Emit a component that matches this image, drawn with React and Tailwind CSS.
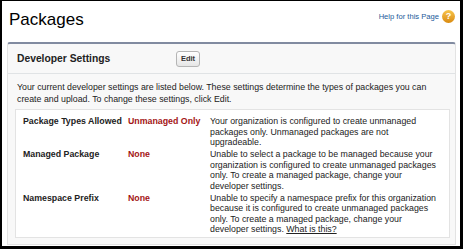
import React from "react";

const rows = [
  {
    label: "Package Types Allowed",
    value: "Unmanaged Only",
    lines: ["Your organization is configured to create unmanaged", "packages only. Unmanaged packages are not", "upgradeable."],
  },
  {
    label: "Managed Package",
    value: "None",
    lines: [
      "Unable to select a package to be managed because your",
      "organization is configured to create unmanaged packages",
      "only. To create a managed package, change your",
      "developer settings.",
    ],
  },
  {
    label: "Namespace Prefix",
    value: "None",
    lines: [
      "Unable to specify a namespace prefix for this organization",
      "because it is configured to create unmanaged packages",
      "only. To create a managed package, change your",
      "developer settings.",
    ],
    link: true,
  },
];

export default function App() {
  return (
    <div
      className="w-[463px] h-[249px] bg-white border-black border-t border-l-2 border-r-[3px] border-b-[3px] overflow-hidden text-[#222]"
      style={{ fontFamily: '"Liberation Sans", Arial, sans-serif' }}
    >
      {/* Page title */}
      <div className="flex items-start justify-between h-[41px] pl-[7px] pr-[5px]">
        <h1 className="text-[17px] leading-[20px] mt-[9px] text-black">Packages</h1>
        <a href="#" className="flex items-center gap-[3px] mt-[9px] text-[7.6px] leading-[13px] text-[#1d5a9a]">
          Help for this Page
          <span className="w-[13px] h-[13px] rounded-full bg-gradient-to-b from-[#f7c54a] to-[#d98a0a] text-white text-[9px] font-bold leading-[13px] text-center">
            ?
          </span>
        </a>
      </div>

      {/* Panel */}
      <div className="ml-[5px] w-[449px] h-[203px] bg-[#f8f8f8] border-t-2 border-t-[#818ba0] border-x border-b border-x-[#e3e3e3] border-b-[#e3e3e3] rounded-t-[3px]">
        <div className="flex items-center h-[30px] pl-[9px] border-b border-[#e0e3e5]">
          <h2 className="w-[159px] text-[10.3px] font-bold text-[#222]">Developer Settings</h2>
          <button className="w-[24px] h-[16px] rounded-[3px] border border-[#b5b5b5] bg-gradient-to-b from-white to-[#e6e6e6] text-[7.5px] font-bold text-[#333]">
            Edit
          </button>
        </div>

        <p className="pl-[9px] pr-[4px] pt-[7px] text-[8.8px] leading-[12px] text-[#222]">
          Your current developer settings are listed below. These settings determine the types of packages you can
          <br />
          create and upload. To change these settings, click Edit.
        </p>

        <div className="mt-[4px] ml-[7px] w-[435px] h-[129px] bg-white border border-[#e3e3e3] pt-[6px] pl-[7px]">
          {rows.map((r) => (
            <div key={r.label} className="grid grid-cols-[105px_82px_240px] pb-[1.5px] text-[8.8px] leading-[10.5px]">
              <div className="font-bold text-[#222]">{r.label}</div>
              <div className="font-bold text-[#a31515]">{r.value}</div>
              <div className="text-[#222]">
                {r.lines.map((l, i) => (
                  <div key={i}>
                    {l}
                    {r.link && i === r.lines.length - 1 && (
                      <>
                        {" "}
                        <a href="#" className="underline">What is this?</a>
                      </>
                    )}
                  </div>
                ))}
              </div>
            </div>
          ))}
        </div>
      </div>
    </div>
  );
}
